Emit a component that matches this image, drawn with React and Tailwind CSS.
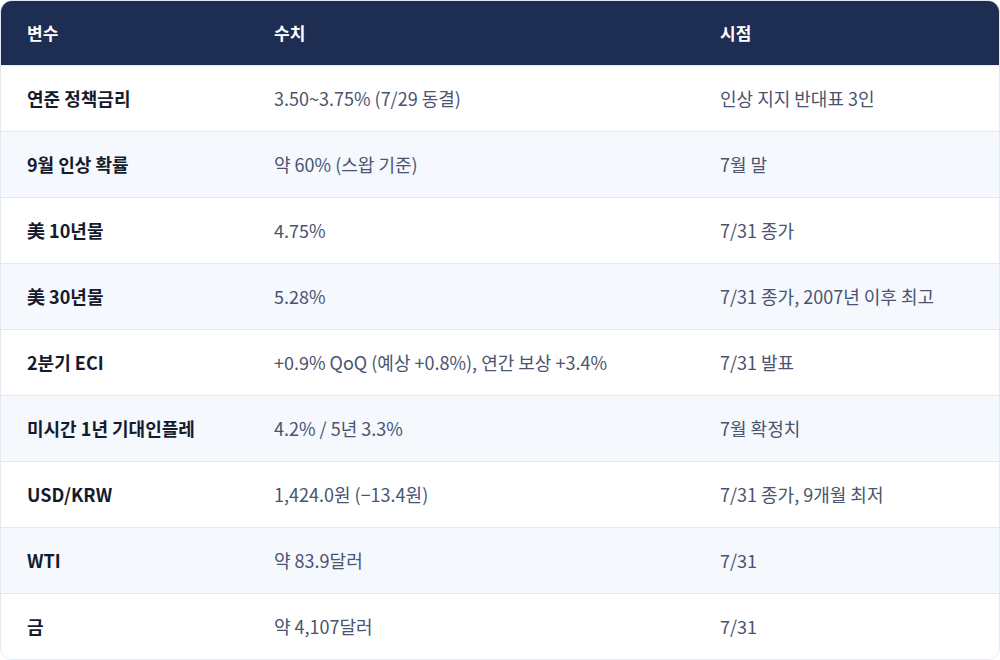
import React from "react";

const rows = [
  ["연준 정책금리", "3.50~3.75% (7/29 동결)", "인상 지지 반대표 3인"],
  ["9월 인상 확률", "약 60% (스왑 기준)", "7월 말"],
  ["美 10년물", "4.75%", "7/31 종가"],
  ["美 30년물", "5.28%", "7/31 종가, 2007년 이후 최고"],
  ["2분기 ECI", "+0.9% QoQ (예상 +0.8%), 연간 보상 +3.4%", "7/31 발표"],
  ["미시간 1년 기대인플레", "4.2% / 5년 3.3%", "7월 확정치"],
  ["USD/KRW", "1,424.0원 (−13.4원)", "7/31 종가, 9개월 최저"],
  ["WTI", "약 83.9달러", "7/31"],
  ["금", "약 4,107달러", "7/31"],
];

export default function App() {
  return (
    <div
      className="w-[1000px] h-[660px] bg-white"
      style={{ fontFamily: "'Noto Sans CJK KR', 'Noto Sans', sans-serif" }}
    >
      <div className="w-full h-full rounded-xl border border-[#e2e8f0] overflow-hidden flex flex-col">
        <div className="flex h-[64px] shrink-0 items-center bg-[#1e2d52] text-white font-bold text-[17px]">
          <div className="w-[247px] pl-[26px]">변수</div>
          <div className="w-[446px] pl-[26px]">수치</div>
          <div className="flex-1 pl-[26px]">시점</div>
        </div>
        {rows.map((r, i) => (
          <div
            key={i}
            className={`flex h-[66px] shrink-0 items-center text-[18px] border-t border-[#e2e8f0] ${
              i % 2 === 1 ? "bg-[#f5f8fd]" : "bg-white"
            }`}
          >
            <div className="w-[247px] pl-[26px] font-bold text-[#151b2c]">{r[0]}</div>
            <div className="w-[446px] pl-[26px] text-[#4a5470]">{r[1]}</div>
            <div className="flex-1 pl-[26px] text-[#4a5470]">{r[2]}</div>
          </div>
        ))}
      </div>
    </div>
  );
}
